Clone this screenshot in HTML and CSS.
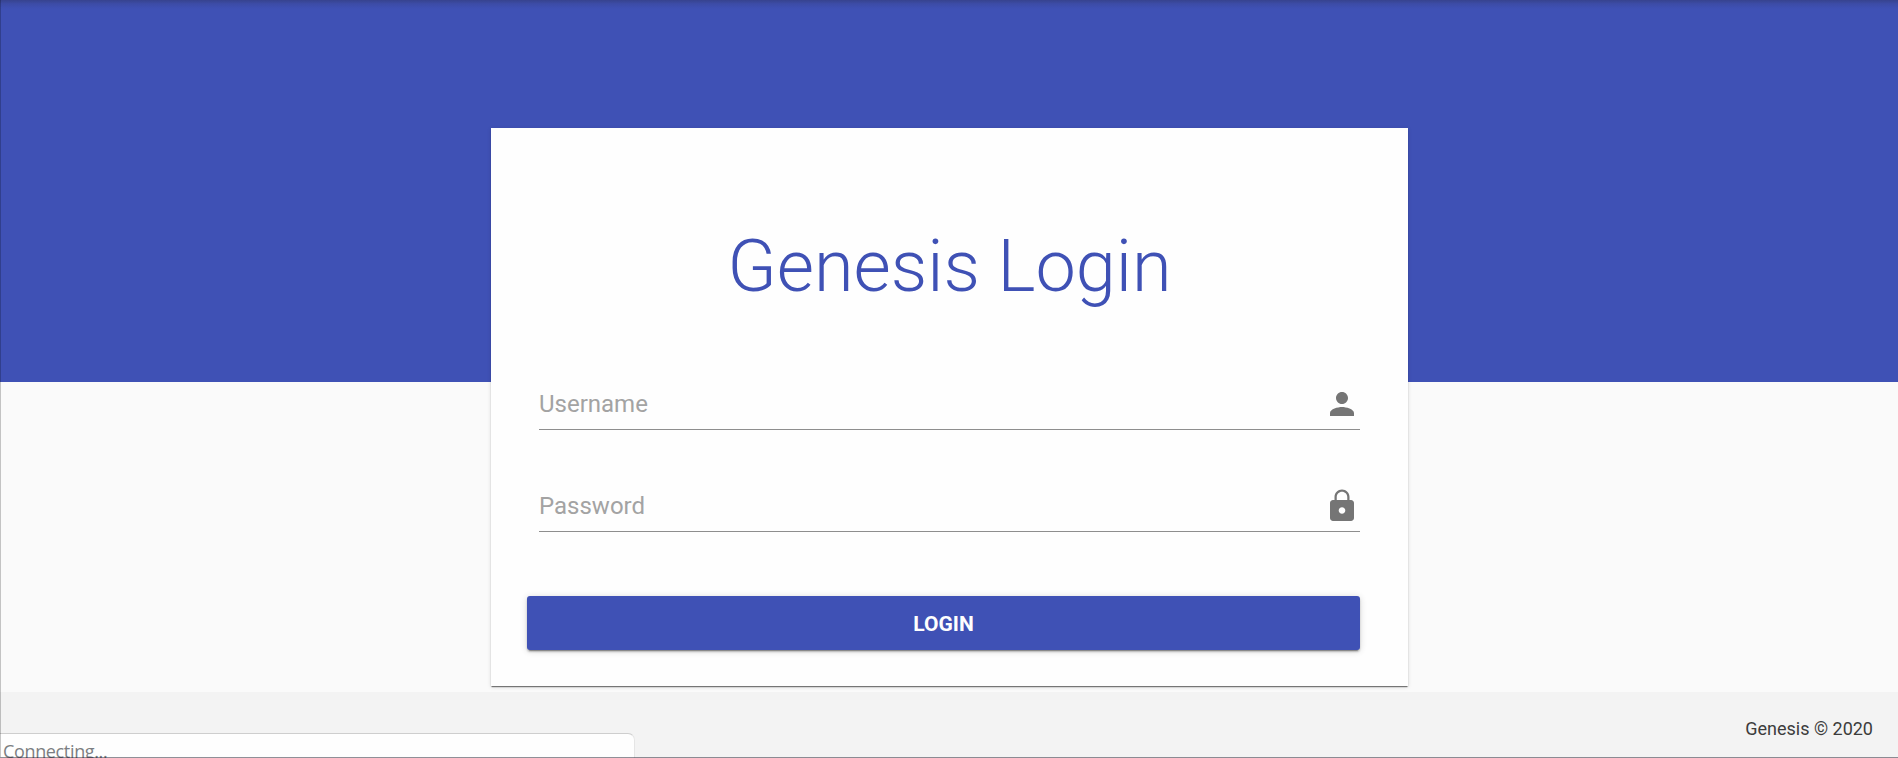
FILE: index.html
```
<!DOCTYPE html>
<html lang="en">
<head>
<meta charset="utf-8">
<title>Genesis Login</title>
<link rel="stylesheet" href="styles.css">
</head>
<body>
<div class="page">
  <main class="main">
    <form class="card">
      <h1 class="title"><span class="title-text">Genesis Login</span></h1>
      <div class="field">
        <span class="label username">Username</span>
        <svg class="icon" viewBox="0 0 24 24"><path d="M12 12c2.21 0 4-1.79 4-4s-1.79-4-4-4-4 1.79-4 4 1.79 4 4 4zm0 2c-2.67 0-8 1.34-8 4v2h16v-2c0-2.66-5.33-4-8-4z"/></svg>
      </div>
      <div class="field">
        <span class="label password">Password</span>
        <svg class="icon" viewBox="0 0 24 24"><path d="M18 8h-1V6c0-2.76-2.24-5-5-5S7 3.240 7 6v2H6c-1.100 0-2 .9-2 2v10c0 1.100.9 2 2 2h12c1.100 0 2-.9 2-2V10c0-1.100-.9-2-2-2zm-6 9.200c-1.200 0-2.200-1-2.200-2.200s1-2.200 2.200-2.200 2.200 1 2.200 2.200-1 2.200-2.200 2.200zm3.500-9.200H8.500V6c0-1.930 1.570-3.500 3.500-3.500s3.500 1.570 3.500 3.500v2z"/></svg>
      </div>
      <button class="login" type="button">LOGIN</button>
    </form>
  </main>
  <footer class="footer">Genesis © 2020</footer>
</div>
<div class="status">Connecting...</div>
<div class="frame"></div>
</body>
</html>
```
FILE: styles.css
```
* { box-sizing: border-box; }
body {
  margin: 0;
  height: 758px;
  overflow: hidden;
  font-family: Roboto, sans-serif;
  position: relative;
}
.page { display: flex; flex-direction: column; height: 758px; }
.main {
  flex: 0 0 692px;
  padding: 128px 0 0 491px;
  background: linear-gradient(#3f51b5 382px, #fafafa 382px);
}
.card {
  width: 917px;
  height: 558px;
  padding: 88px 48px 0;
  background: #fefefe;
  box-shadow: 0 2px 1px -1px rgba(0,0,0,.36), 0 1px 1px rgba(0,0,0,.2), 0 1px 4px rgba(0,0,0,.14);
}
.title {
  margin: 0 0 51px;
  height: 112px;
  line-height: 102px;
  font-size: 72px;
  font-weight: 300;
  text-align: center;
  color: #3f51b5;
  white-space: nowrap;
}
.field {
  display: flex;
  justify-content: space-between;
  align-items: center;
  height: 51px;
  margin-bottom: 51px;
  padding: 0 0 1px;
  border-bottom: 1px solid #8e8e8e;
}
.label { font-size: 24px; line-height: 36px; color: #a3a3a3; }
.icon { width: 36px; height: 36px; fill: #757575; }
.login {
  display: block;
  width: 833px;
  height: 54px;
  margin: 64px 0 0 -12px;
  padding: 2px 0 0;
  border: 0;
  border-radius: 3px;
  background: #3f51b5;
  color: #fefefe;
  font: 700 21px/52px Roboto, sans-serif;
  box-shadow: 0 3px 1px -2px rgba(0,0,0,.3), 0 2px 2px rgba(0,0,0,.2), 0 1px 7px rgba(0,0,0,.16);
}
.footer {
  flex: 1;
  padding: 25px 25px 0 0;
  background: #f3f3f3;
  color: #3c3c3c;
  font-size: 18px;
  line-height: 24px;
  text-align: right;
}
.status {
  position: absolute;
  left: 0;
  bottom: 0;
  width: 635px;
  height: 25px;
  padding: 5px 0 0 3px;
  overflow: hidden;
  background: #fefefe;
  border-top: 1px solid #cecece;
  border-right: 1px solid #e5e5e5;
  border-top-right-radius: 7px;
  color: #7c7e82;
  font: 18px/25px "Open Sans", sans-serif;
  letter-spacing: -.35px;
}
.frame {
  position: absolute;
  inset: 0;
  border-left: 1px solid rgba(0,0,0,.22);
  border-bottom: 1px solid rgba(0,0,0,.22);
  background: linear-gradient(rgba(40,40,70,.35), rgba(40,40,70,.12) 4px, rgba(40,40,70,0) 9px);
  pointer-events: none;
}
```
